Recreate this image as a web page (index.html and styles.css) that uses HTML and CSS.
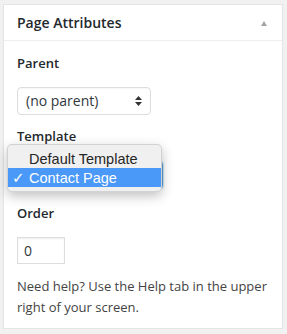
FILE: index.html
```html
<!DOCTYPE html>
<html lang="en">
<head>
  <meta charset="UTF-8">
  <title>Page Attributes</title>
  <link rel="stylesheet" href="styles.css">
</head>
<body>
  <div class="postbox">
    <div class="postbox-header">
      <h2>Page Attributes</h2>
      <span class="toggle-arrow"></span>
    </div>
    <div class="inside">
      <p class="field-label">Parent</p>
      <div class="select parent-select">
        <span>(no parent)</span>
        <svg class="updown" width="7" height="10" viewBox="0 0 7 10"><path d="M3.5 0L7 4H0Z M0 6H7L3.5 10Z" fill="#333"/></svg>
      </div>
      <p class="field-label">Template</p>
      <div class="select template-select"></div>
      <p class="field-label">Order</p>
      <div class="order-input">0</div>
      <p class="help">Need help? Use the Help tab in the upper right of your screen.</p>

      <ul class="popup-menu">
        <li><span class="check"></span>Default Template</li>
        <li class="selected"><span class="check">✓</span>Contact Page</li>
      </ul>
    </div>
  </div>
</body>
</html>
```

FILE: styles.css
```css
body { margin:0; background:#f1f1f1; font-family:"Open Sans",sans-serif; color:#32373c; }
.postbox { position:relative; margin:4px 0 0 3px; width:280px; box-sizing:border-box; background:#fff; border:1px solid #e5e5e5; box-shadow:0 1px 1px rgba(0,0,0,.04); }
.postbox-header { display:flex; align-items:center; justify-content:space-between; padding:8px 15px 7px 13px; border-bottom:1px solid #eee; }
.postbox-header h2 { margin:0; font-size:14px; font-weight:600; line-height:20px; color:#23282d; }
.toggle-arrow { width:0; height:0; border-left:3.5px solid transparent; border-right:3.5px solid transparent; border-bottom:5px solid #a0a5aa; margin-top:1px; }
.inside { padding:0 13px 10px; }
.field-label { margin:12px 0 0; font-size:13px; font-weight:600; line-height:20px; color:#23282d; }
.select { box-sizing:border-box; height:28px; margin-top:14px; background:#fff; border:1px solid #ddd; border-radius:4px; display:flex; align-items:center; justify-content:space-between; padding:0 8px 0 8px; font-size:14px; color:#32373c; box-shadow:inset 0 1px 2px rgba(0,0,0,.04); }
.parent-select { width:134px; }
.parent-select span { margin-top:-1px; }
.template-select { width:146px; margin-top:15px; border-color:#5b9dd9; box-shadow:0 0 2px rgba(30,140,190,.8); }
.template-select + .field-label { margin-top:14px; }
.parent-select + .field-label { margin-top:11px; }
.order-input { box-sizing:border-box; width:48px; height:27px; margin-top:14px; border:1px solid #ddd; box-shadow:inset 0 1px 2px rgba(0,0,0,.07); font-size:14px; line-height:25px; padding-left:6px; color:#32373c; }
.help { margin:12px 0 0; font-size:13px; line-height:21px; color:#444; }
.popup-menu { position:absolute; left:3px; top:139px; width:153px; margin:0; padding:4px 0; list-style:none; background:#f0f0f0; border:1px solid rgba(0,0,0,.12); border-radius:5px; box-shadow:0 4px 12px rgba(0,0,0,.25); font-family:"Liberation Sans",Arial,sans-serif; font-size:14.5px; color:#262626; }
.popup-menu li { display:flex; align-items:center; height:19px; }
.popup-menu li.selected { background:#4a98f8; color:#fff; }
.check { width:21px; padding-left:4px; box-sizing:border-box; font-family:"DejaVu Sans",sans-serif; font-size:15px; }
```
